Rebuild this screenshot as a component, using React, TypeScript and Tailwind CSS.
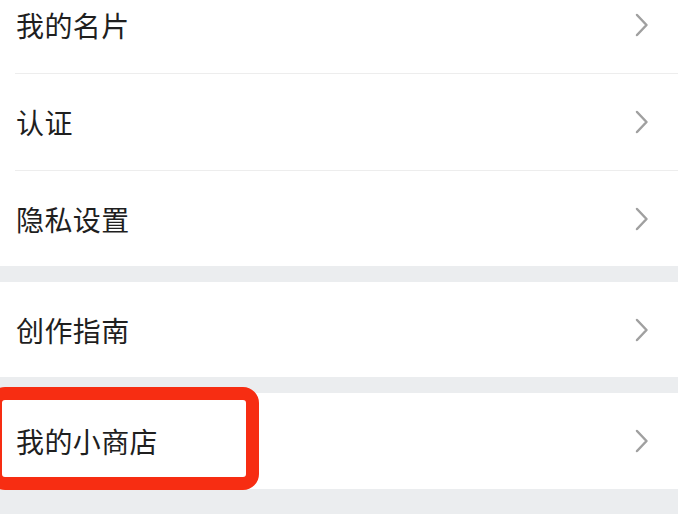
import React from "react";

function Chevron() {
  return (
    <svg width="14" height="24" viewBox="0 0 14 24" className="shrink-0">
      <polyline
        points="2,2 11.5,12 2,22"
        fill="none"
        stroke="#a0a0a0"
        strokeWidth="2.5"
        strokeLinecap="round"
        strokeLinejoin="round"
      />
    </svg>
  );
}

function Row({
  label,
  h,
  divider,
  children,
}: {
  label: string;
  h: string;
  divider?: boolean;
  children?: React.ReactNode;
}) {
  return (
    <div className="relative bg-white">
      <div className={`flex items-center justify-between pl-[16px] pr-[29px] ${h}`}>
        <span className="text-[28px] leading-none tracking-[0.4px] text-[#1f1f1f]">{label}</span>
        <Chevron />
      </div>
      {divider && <div className="ml-[15px] h-px bg-[#ededed]" />}
      {children}
    </div>
  );
}

export default function App() {
  return (
    <div
      className="h-[514px] w-[678px] overflow-hidden bg-[#ebedef]"
      style={{ fontFamily: '"Noto Sans CJK SC", "Noto Sans", sans-serif' }}
    >
      <div className="-mt-[23px] flex flex-col">
        <Row label="我的名片" h="h-[96px]" divider />
        <Row label="认证" h="h-[96px]" divider />
        <Row label="隐私设置" h="h-[95px]" />
        <div className="h-[16px]" />
        <Row label="创作指南" h="h-[95px]" />
        <div className="h-[16px]" />
        <Row label="我的小商店" h="h-[96px]">
          <div className="pointer-events-none absolute left-[-11px] top-[-6px] h-[103px] w-[270px] rounded-[16px] border-[13px] border-[#f72d12]" />
        </Row>
      </div>
    </div>
  );
}
